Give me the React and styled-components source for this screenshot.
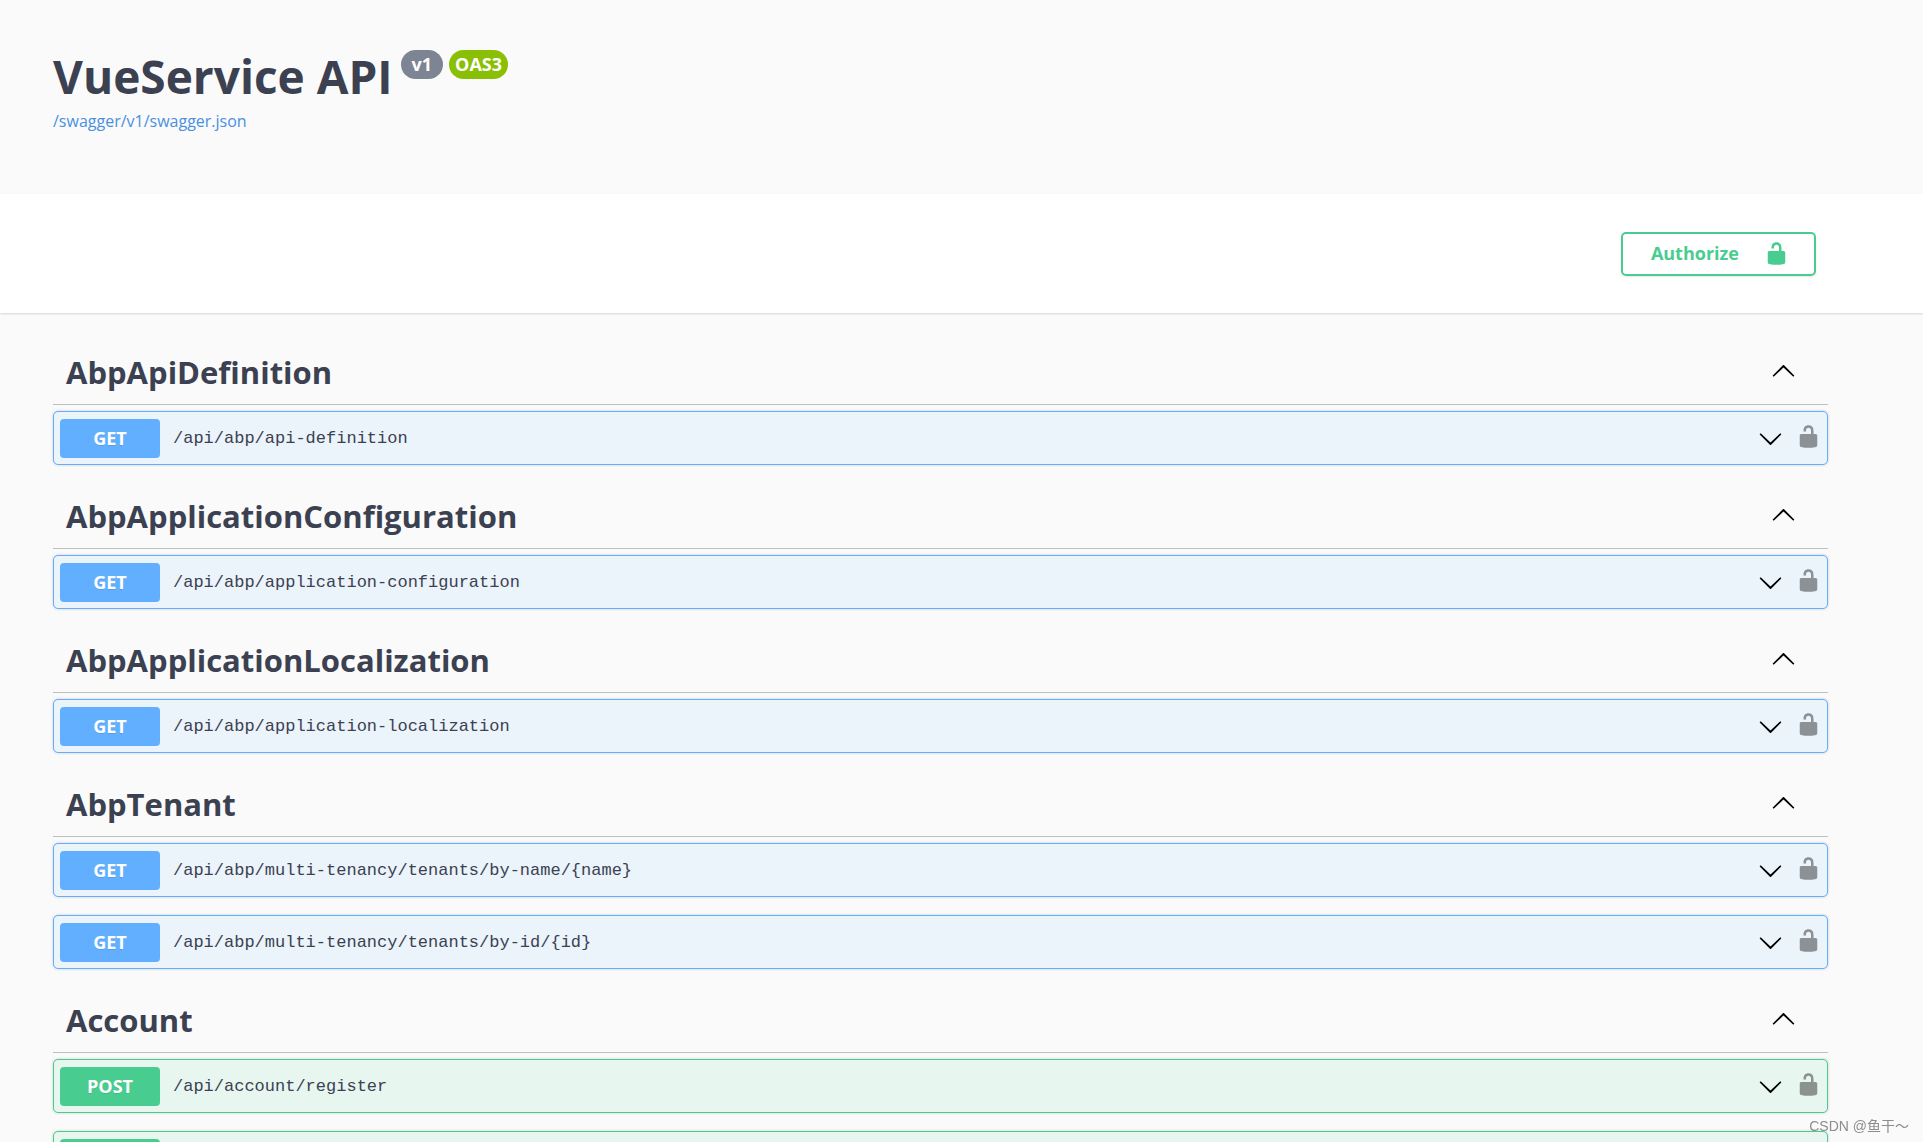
import React from "react";
import styled, { createGlobalStyle } from "styled-components";

const GlobalStyle = createGlobalStyle`
  *, *::before, *::after { box-sizing: border-box; }
  html { overflow: hidden; }
  body {
    margin: 0;
    height: 100vh;
    overflow: hidden;
    background: #fafafa;
    color: #3b4151;
    font-family: "Open Sans", "Noto Sans", sans-serif;
  }
`;

const METHOD_COLORS = {
  GET: { solid: "#61affe", tint: "#ebf3fb" },
  POST: { solid: "#49cc90", tint: "#e8f6f0" },
};

const Wrapper = styled.div`
  max-width: 1825px;
  margin: 0 auto;
  padding: 0 25px;
`;

const Header = styled.header`
  padding: 48px 42px 59px 0;
`;

const TitleRow = styled.div`
  display: flex;
  align-items: flex-start;
  gap: 8px;
`;

const Title = styled.h1`
  margin: 0;
  padding-bottom: 4px;
  font-size: 46px;
  line-height: 56px;
  font-weight: 700;
`;

const Badges = styled.div`
  display: flex;
  gap: 6px;
  padding-top: 2px;
`;

const Badge = styled.span`
  padding: 0 ${(p) => p.$pad}px;
  border-radius: 15px;
  background: ${(p) => p.$color};
  color: #fff;
  font-size: 18px;
  line-height: 29px;
  font-weight: 700;
`;

const SpecLink = styled.a`
  display: block;
  width: fit-content;
  color: #4990e2;
  font-size: 16px;
  line-height: 27px;
  text-decoration: none;
`;

const Schemes = styled.section`
  padding: 38px 42px 37px 0;
  background: #fff;
  box-shadow: 0 1px 2px rgba(0, 0, 0, 0.15);
`;

const SchemesInner = styled.div`
  display: flex;
  justify-content: flex-end;
  padding-right: 12px;
`;

const AuthorizeButton = styled.button`
  display: flex;
  align-items: center;
  gap: 25px;
  height: 44px;
  padding: 0 25px 2px 28px;
  border: 2px solid #49cc90;
  border-radius: 5px;
  background: transparent;
  box-shadow: 0 1px 2px rgba(0, 0, 0, 0.1);
  color: #49cc90;
  font: 700 18px/24px "Open Sans", "Noto Sans", sans-serif;
`;

const Main = styled.main`
  padding: 26px 42px 0 0;
`;

const TagHeading = styled.h2`
  margin: 0 0 6px;
  border-bottom: 1px solid #bfc0c4;
`;

const TagButton = styled.button`
  display: flex;
  align-items: center;
  justify-content: space-between;
  width: 100%;
  height: 65px;
  padding: 0 32px 0 13px;
  border: 0;
  background: transparent;
  color: #3b4151;
  font: 700 31px/40px "Open Sans", "Noto Sans", sans-serif;
  text-align: left;
`;

const Operation = styled.div`
  display: flex;
  align-items: center;
  height: 54px;
  margin-bottom: 18px;
  padding: 0 6px;
  border: 1px solid ${(p) => METHOD_COLORS[p.$method].solid};
  border-radius: 5px;
  background: ${(p) => METHOD_COLORS[p.$method].tint};
  box-shadow: 0 0 3px rgba(0, 0, 0, 0.19);
`;

const SummaryButton = styled.button`
  display: flex;
  flex: 1;
  align-items: center;
  gap: 13px;
  padding: 0 13px 0 0;
  border: 0;
  background: transparent;
  color: #3b4151;
  text-align: left;
`;

const Method = styled.span`
  width: 100px;
  border-radius: 4px;
  background: ${(p) => METHOD_COLORS[p.$method].solid};
  color: #fff;
  font: 700 18px/39px "Open Sans", "Noto Sans", sans-serif;
  text-align: center;
  text-shadow: 0 1px 0 rgba(0, 0, 0, 0.1);
`;

const Path = styled.span`
  flex: 1;
  padding-top: 2px;
  font: 400 17px/24px "Liberation Mono", monospace;
`;

const LockButton = styled.button`
  display: flex;
  padding: 0 0 4px;
  border: 0;
  background: transparent;
  color: #000;
  opacity: 0.4;
`;

const Icon = styled.svg`
  display: block;
  width: 25px;
  height: 25px;
  fill: currentColor;
`;

const ArrowIcon = styled(Icon)`
  color: #000;
  transform: ${(p) => (p.$up ? "rotate(180deg)" : "none")};
`;

const Watermark = styled.div`
  position: fixed;
  right: 14px;
  bottom: 6px;
  color: #8d8d90;
  font: 400 14px/20px "Liberation Sans", "Noto Sans CJK SC", sans-serif;
`;

function UnlockedIcon() {
  return (
    <Icon viewBox="0 0 20 20" aria-hidden="true">
      <path d="M15.8 8H14V5.6C14 2.703 12.665 1 10 1 7.334 1 6 2.703 6 5.6V6h2v-.801C8 3.754 8.797 3 10 3c1.203 0 2 .754 2 2.199V8H4c-.553 0-1 .646-1 1.199V17c0 .549.428 1.139.951 1.307l1.197.387C5.672 18.861 6.55 19 7.1 19h5.8c.549 0 1.428-.139 1.951-.307l1.196-.387c.524-.167.953-.757.953-1.306V9.199C17 8.646 16.352 8 15.8 8z" />
    </Icon>
  );
}

function Arrow({ up }) {
  return (
    <ArrowIcon $up={up} viewBox="0 0 20 20" aria-hidden="true">
      <path d="M17.418 6.109c.272-.268.709-.268.979 0s.271.701 0 .969l-7.908 7.83c-.27.268-.707.268-.979 0l-7.908-7.83c-.27-.268-.27-.701 0-.969.271-.268.709-.268.979 0L10 13.25l7.418-7.141z" />
    </ArrowIcon>
  );
}

const TAGS = [
  { name: "AbpApiDefinition", operations: [["GET", "/api/abp/api-definition"]] },
  { name: "AbpApplicationConfiguration", operations: [["GET", "/api/abp/application-configuration"]] },
  { name: "AbpApplicationLocalization", operations: [["GET", "/api/abp/application-localization"]] },
  {
    name: "AbpTenant",
    operations: [
      ["GET", "/api/abp/multi-tenancy/tenants/by-name/{name}"],
      ["GET", "/api/abp/multi-tenancy/tenants/by-id/{id}"],
    ],
  },
  {
    name: "Account",
    operations: [
      ["POST", "/api/account/register"],
      ["POST", ""],
    ],
  },
];

function OperationRow({ method, path }) {
  return (
    <Operation $method={method}>
      <SummaryButton type="button" aria-label={path ? undefined : "Operation"}>
        <Method $method={method}>{path ? method : "\u00a0"}</Method>
        <Path>{path}</Path>
        <Arrow />
      </SummaryButton>
      <LockButton type="button" aria-label="Authorization button unlocked">
        <UnlockedIcon />
      </LockButton>
    </Operation>
  );
}

export default function App() {
  return (
    <>
      <GlobalStyle />
      <Header>
        <Wrapper>
          <TitleRow>
            <Title>VueService API</Title>
            <Badges>
              <Badge $color="#7d8492" $pad={11}>v1</Badge>
              <Badge $color="#89bf04" $pad={6}>OAS3</Badge>
            </Badges>
          </TitleRow>
          <SpecLink href="#spec">/swagger/v1/swagger.json</SpecLink>
        </Wrapper>
      </Header>
      <Schemes>
        <Wrapper>
          <SchemesInner>
            <AuthorizeButton type="button">
              Authorize
              <UnlockedIcon />
            </AuthorizeButton>
          </SchemesInner>
        </Wrapper>
      </Schemes>
      <Main>
        <Wrapper>
          {TAGS.map((tag) => (
            <section key={tag.name}>
              <TagHeading>
                <TagButton type="button" aria-expanded="true">
                  {tag.name}
                  <Arrow up />
                </TagButton>
              </TagHeading>
              {tag.operations.map(([method, path], i) => (
                <OperationRow key={i} method={method} path={path} />
              ))}
            </section>
          ))}
        </Wrapper>
      </Main>
      <Watermark>CSDN @鱼干～</Watermark>
    </>
  );
}
